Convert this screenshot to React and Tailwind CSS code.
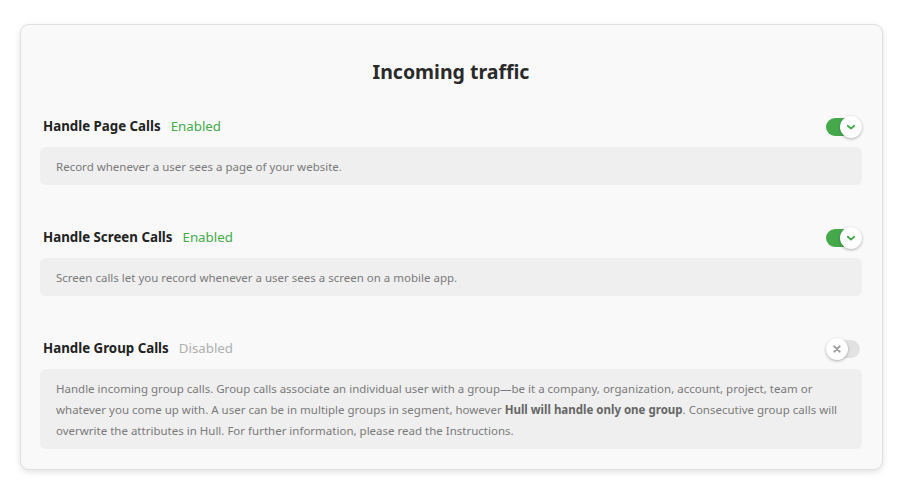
import { useState } from 'react';

function Toggle({ on, onChange }) {
  return (
    <button
      onClick={() => onChange(!on)}
      className={`relative w-[36px] h-[22px] flex items-center ${on ? 'justify-end' : 'justify-start'}`}
    >
      <span
        className={`absolute left-0 right-[2px] top-[2px] h-[18px] rounded-full ${on ? 'bg-[#45a94c]' : 'bg-[#e2e2e2]'}`}
      />
      <span className="relative w-[22px] h-[22px] rounded-full bg-white shadow-[0_1px_3px_rgba(0,0,0,0.3)] flex items-center justify-center">
        {on ? (
          <svg width="10" height="10" viewBox="0 0 10 10">
            <path d="M1.8 3.8 L5 6.6 L8.2 3.8" fill="none" stroke="#45a94c" strokeWidth="1.9" strokeLinecap="round" strokeLinejoin="round" />
          </svg>
        ) : (
          <svg width="10" height="10" viewBox="0 0 10 10">
            <path d="M2.3 2.3 L7.7 7.7 M7.7 2.3 L2.3 7.7" fill="none" stroke="#9a9a9a" strokeWidth="1.9" strokeLinecap="round" />
          </svg>
        )}
      </span>
    </button>
  );
}

function Setting({ label, on, onChange, children }) {
  return (
    <div>
      <div className="flex items-center justify-between pl-[3px] h-[22px] pt-[1px]">
        <div className="flex items-center gap-[10px]">
          <span className="text-[13.3px] font-bold text-[#222]">{label}</span>
          <span className={`text-[13.3px] ${on ? 'text-[#45a94c]' : 'text-[#b0b0b0]'}`}>
            {on ? 'Enabled' : 'Disabled'}
          </span>
        </div>
        <Toggle on={on} onChange={onChange} />
      </div>
      <div className="mt-[10px] bg-[#efefef] rounded-[6px] px-4 pt-[9px] pb-[8px] text-[11.5px] leading-[21px] text-[#7a7a7a]">
        {children}
      </div>
    </div>
  );
}

export default function App() {
  const [page, setPage] = useState(true);
  const [screen, setScreen] = useState(true);
  const [group, setGroup] = useState(false);

  return (
    <div className="w-[908px] h-[491px] bg-white pt-[24px] px-[20px] font-['Noto_Sans',sans-serif]">
      <div className="w-[863px] bg-[#f9f9f9] border border-[#e0e0e0] rounded-[9px] shadow-[0_2px_6px_rgba(0,0,0,0.12)] pl-[19px] pr-[20px] pb-[20px]">
        <h1 className="text-center text-[19.5px] font-bold text-[#2a2a2a] pt-[35px] pb-[31px] leading-[24px]">
          Incoming traffic
        </h1>
        <div className="flex flex-col gap-[41px]">
          <Setting label="Handle Page Calls" on={page} onChange={setPage}>
            Record whenever a user sees a page of your website.
          </Setting>
          <Setting label="Handle Screen Calls" on={screen} onChange={setScreen}>
            Screen calls let you record whenever a user sees a screen on a mobile app.
          </Setting>
          <Setting label="Handle Group Calls" on={group} onChange={setGroup}>
            Handle incoming group calls. Group calls associate an individual user with a group—be it a company, organization, account, project, team or whatever you come up with. A user can be in multiple groups in segment, however{' '}
            <b className="font-bold text-[#666]">Hull will handle only one group</b>. Consecutive group calls will overwrite the attributes in Hull. For further information, please read the Instructions.
          </Setting>
        </div>
      </div>
    </div>
  );
}
